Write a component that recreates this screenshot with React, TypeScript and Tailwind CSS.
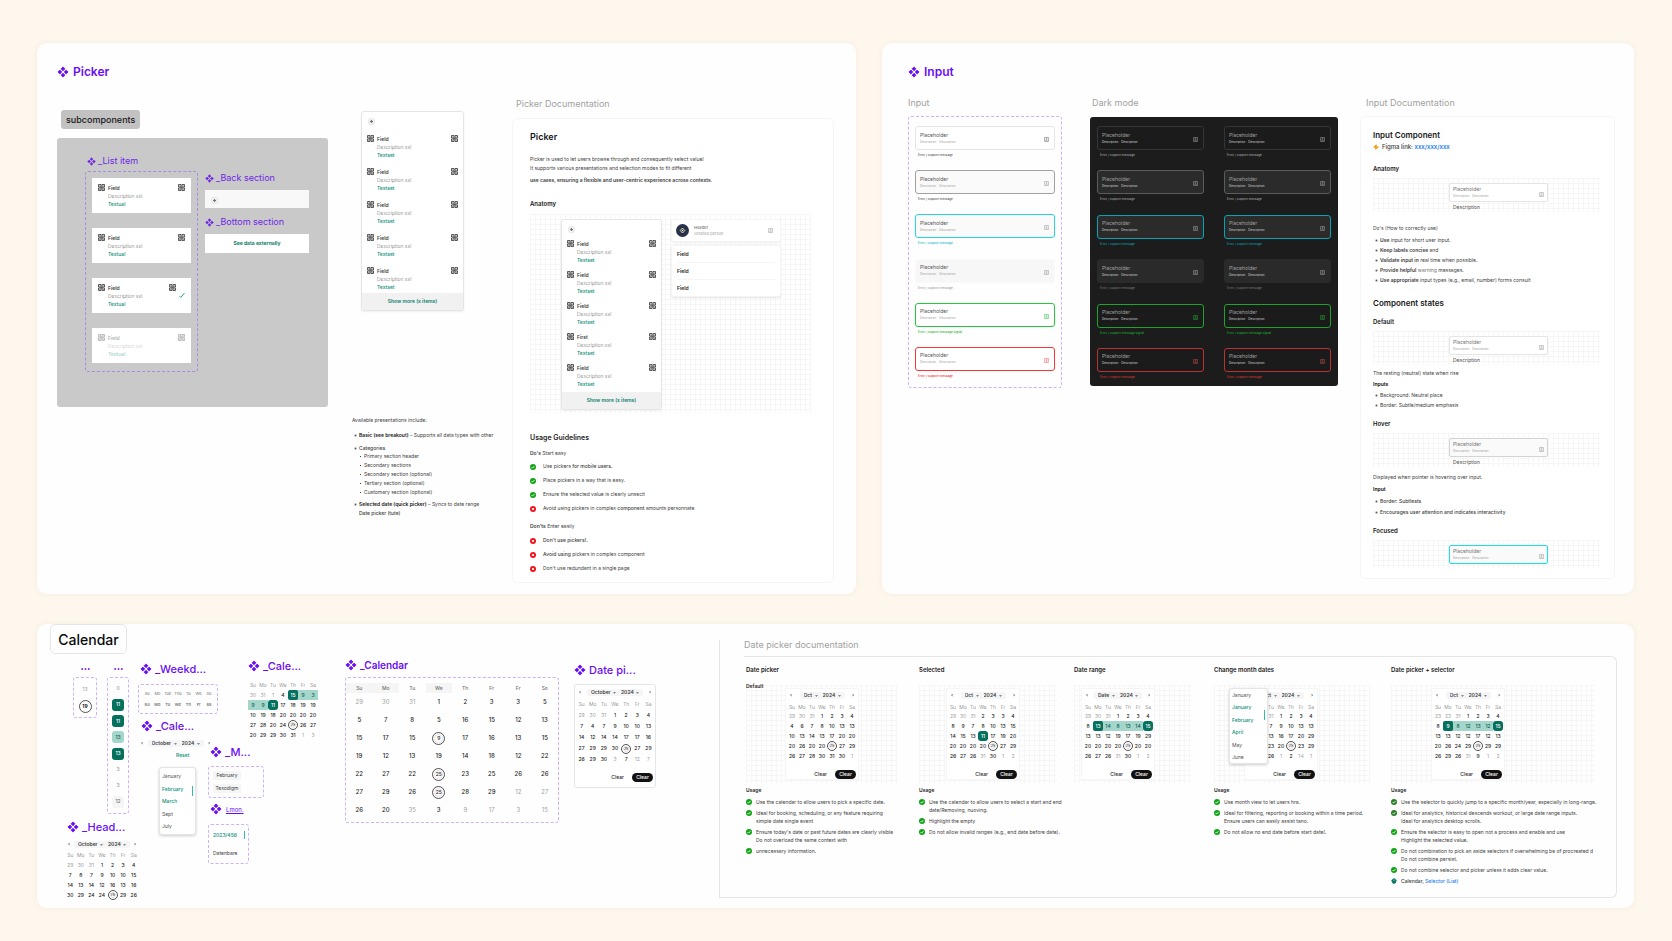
import type { ReactNode } from "react";

/* ---------- icons ---------- */

function ComponentIcon({ className }: { className: string }) {
  return (
    <svg viewBox="0 0 24 24" className={className} fill="currentColor" stroke="currentColor" strokeWidth="1.6" strokeLinejoin="round" aria-hidden="true">
      <path d="M12 1.8l3.9 3.9L12 9.6 8.100 5.700z" />
      <path d="M18.300 8.100l3.900 3.900-3.900 3.900-3.900-3.900z" />
      <path d="M12 14.400l3.900 3.900-3.900 3.900-3.900-3.900z" />
      <path d="M5.700 8.100l3.900 3.900-3.900 3.900L1.800 12z" />
    </svg>
  );
}

function CodeIcon({ className = "size-[7px] text-neutral-700" }: { className?: string }) {
  return (
    <svg viewBox="0 0 14 14" className={"shrink-0 " + className} fill="none" stroke="currentColor" strokeWidth="1.7" aria-hidden="true">
      <path d="M1 1h5v5H1zM8 1h5v5H8zM1 8h5v5H1zM8 8h5v5H8z" />
      <path d="M3.500 3v1.500M10.500 3v1.500M3.500 10v1.500M10.500 10v1.500M5.500 7h3" />
    </svg>
  );
}

function BadgeIcon({ className }: { className: string }) {
  return (
    <svg viewBox="0 0 12 12" className={"shrink-0 " + className} fill="none" stroke="currentColor" strokeWidth="1.400" aria-hidden="true">
      <rect x="1" y="1" width="10" height="10" rx="1" />
      <circle cx="6" cy="4.600" r="1.500" />
      <path d="M3 9.500c.6-1.800 5.400-1.800 6 0" />
    </svg>
  );
}

function BackIcon() {
  return (
    <svg viewBox="0 0 14 14" className="size-[7px] text-neutral-500" aria-hidden="true">
      <circle cx="7" cy="7" r="6.500" fill="#f3f3f3" stroke="#d4d4d4" />
      <path d="M7 4v6M4 7h6" stroke="currentColor" strokeWidth="2.400" />
    </svg>
  );
}

type Mark = "ok" | "no" | "deep" | "pin";

function StatusIcon({ mark }: { mark: Mark }) {
  if (mark === "pin") {
    return (
      <svg viewBox="0 0 12 12" className="size-[6px] shrink-0" aria-hidden="true">
        <path d="M6 0l5.500 4.500L9.500 10 6 12 2.500 10 .5 4.500z" fill="#0b7a68" />
        <path d="M6 3v3" stroke="#d4f0ea" strokeWidth="1.200" />
      </svg>
    );
  }
  const fill = mark === "no" ? "#f5141c" : mark === "deep" ? "#2b7d2b" : "#12a417";
  return (
    <svg viewBox="0 0 12 12" className="size-[6px] shrink-0" aria-hidden="true">
      <circle cx="6" cy="6" r="6" fill={fill} />
      {mark === "no" ? (
        <path d="M4.200 4.200l3.600 3.600M7.800 4.200L4.200 7.800" stroke="#fff" strokeWidth="1.900" />
      ) : (
        <path d="M3.200 6.200l2 2 3.600-4" stroke="#fff" strokeWidth="1.700" fill="none" />
      )}
    </svg>
  );
}

/* ---------- shared pieces ---------- */

function PanelTitle({ children }: { children: ReactNode }) {
  return (
    <h1 className="flex h-4 items-center gap-1 text-[12px] font-semibold text-[#6a0df5]">
      <ComponentIcon className="size-3" />
      {children}
    </h1>
  );
}

function PartTitle({ children, className = "", text = "text-[11px] font-medium" }: { children: ReactNode; className?: string; text?: string }) {
  return (
    <h2 className={"flex h-[14px] items-center gap-[3px] whitespace-nowrap text-[#6a0df5] " + text + " " + className}>
      <ComponentIcon className="size-3" />
      {children}
    </h2>
  );
}

function SubTitle({ children }: { children: ReactNode }) {
  return (
    <h3 className="flex h-3 items-center gap-[2px] text-[9px] whitespace-nowrap text-[#7026e6]">
      <ComponentIcon className="size-[9px]" />
      {children}
    </h3>
  );
}

function FrameLabel({ children }: { children: ReactNode }) {
  return <h2 className="h-3 text-[9px] leading-3 text-neutral-400">{children}</h2>;
}

function Stage({ children, className }: { children: ReactNode; className: string }) {
  return (
    <div className={"bg-[linear-gradient(#f6f6f6_1px,transparent_1px),linear-gradient(90deg,#f6f6f6_1px,transparent_1px)] bg-[size:5px_5px] " + className}>
      {children}
    </div>
  );
}

function Frame({ children, className, tone = "border-[#cdb2fa]" }: { children: ReactNode; className: string; tone?: string }) {
  return <div className={"rounded-[3px] border border-dashed " + tone + " " + className}>{children}</div>;
}

function FieldItem({ name = "Field", link, faded = false, checked = false }: { name?: string; link: string; faded?: boolean; checked?: boolean }) {
  return (
    <div className={"flex items-start gap-[3px] " + (faded ? "opacity-40" : "")}>
      <CodeIcon />
      <div className="flex-1">
        <p className="text-[5px] leading-[8px] font-semibold text-neutral-700">{name}</p>
        <p className="text-[5px] leading-[8px] font-light text-neutral-500">Description xxl</p>
        <a href="#field" className="block text-[5px] leading-[8px] font-medium text-[#0c8f7b]">{link}</a>
      </div>
      {checked ? (
        <div className="flex">
          <CodeIcon />
          <svg viewBox="0 0 10 10" className="mt-2 ml-[3px] size-[6px]" fill="none" stroke="#14a08a" strokeWidth="1.600" aria-hidden="true">
            <path d="M1 7l2 2 6-7" />
          </svg>
        </div>
      ) : (
        <CodeIcon />
      )}
    </div>
  );
}

function PickerCard({ names, className, listClass }: { names: string[]; className: string; listClass: string }) {
  return (
    <div className={"overflow-hidden rounded-[3px] border border-neutral-200 bg-white shadow-[0_1px_2px_rgba(0,0,0,0.06)] " + className}>
      <button type="button" aria-label="Back" className="mt-[6px] ml-[6px] block">
        <BackIcon />
      </button>
      <div className={"flex flex-col px-[5px] " + listClass}>
        {names.map((name, i) => (
          <FieldItem key={i} name={name} link="Textset" />
        ))}
      </div>
      <button type="button" className="block h-[17px] w-full bg-[#f1f1f1] text-[5px] font-semibold text-[#0b7f6d]">
        Show more (x items)
      </button>
    </div>
  );
}

function MarkedRow({ mark, children }: { mark: Mark; children: ReactNode }) {
  return (
    <li className="flex h-[14px] items-center gap-[7px] whitespace-nowrap">
      <StatusIcon mark={mark} />
      <span>{children}</span>
    </li>
  );
}

function Bullets({ items, className = "" }: { items: ReactNode[]; className?: string }) {
  return (
    <ul className={"text-[5px] leading-[10px] text-neutral-700 " + className}>
      {items.map((item, i) => (
        <li key={i} className="flex items-center gap-[3px] pl-[3px] whitespace-nowrap">
          <span className="size-[1px] rounded-full bg-neutral-800 outline outline-neutral-500/50" />
          <span>{item}</span>
        </li>
      ))}
    </ul>
  );
}

/* ---------- picker ---------- */

function Subcomponents() {
  return (
    <div className="mt-3 w-[271px] shrink-0">
      <p className="ml-[4px] h-[19px] w-fit rounded-[3px] bg-[#c2c2c2] px-[5px] text-[9px] leading-[19px] font-medium text-neutral-900">subcomponents</p>
      <div className="mt-[9px] flex h-[269px] items-start gap-[7px] rounded-[3px] bg-[#c9c9c9] pt-[17px] pl-[28px]">
        <div>
          <div className="ml-[2px]">
            <SubTitle>_List item</SubTitle>
          </div>
          <Frame tone="border-[#a98be0]" className="mt-1 flex w-[113px] flex-col gap-[15px] px-[6px] pt-[6px] pb-[8px]">
            {[0, 1, 2, 3].map((i) => (
              <div key={i} className="h-[35px] bg-white px-[6px] pt-[6px]">
                <FieldItem link="Textual" faded={i === 3} checked={i === 2} />
              </div>
            ))}
          </Frame>
        </div>
        <div className="w-[104px] pt-[17px]">
          <SubTitle>_Back section</SubTitle>
          <div className="mt-[6px] flex h-[18px] items-center bg-[#f8f8f8] pt-[3px] pl-[6px]">
            <BackIcon />
          </div>
          <div className="mt-2">
            <SubTitle>_Bottom section</SubTitle>
          </div>
          <button type="button" className="mt-[6px] block h-[19px] w-full bg-white text-[5px] font-bold text-[#0b7f6d]">
            See data externally
          </button>
        </div>
      </div>
    </div>
  );
}

function Presentations() {
  return (
    <div className="mt-[105px] text-[5px] text-neutral-700">
      <p className="leading-[8px]">Available presentations include:</p>
      <Bullets className="mt-[6px]" items={[<><b className="font-semibold text-neutral-900">Basic (see breakout)</b> – Supports all data types with other</>]} />
      <Bullets className="mt-[3px]" items={[<span className="font-medium">Categories</span>]} />
      <ul className="ml-[6px] -mt-px leading-[9px]">
        {["Primary section header", "Secondary sections", "Secondary section (optional)", "Tertiary section (optional)", "Customary section (optional)"].map((t, i) => (
          <li key={i} className="flex items-center gap-[3px] pl-[2px] whitespace-nowrap">
            <span className="size-[1px] bg-neutral-700" />
            {t}
          </li>
        ))}
      </ul>
      <Bullets className="mt-[2px]" items={[<><b className="font-semibold text-neutral-900">Selected date (quick picker)</b> – Syncs to date range</>]} />
      <p className="pl-[7px] leading-[8px] font-medium">Date picker (tute)</p>
    </div>
  );
}

function PickerDoc() {
  return (
    <div className="mr-[22px] min-w-0 flex-1">
      <div className="pl-1">
        <FrameLabel>Picker Documentation</FrameLabel>
      </div>
      <article className="mt-2 rounded-md border border-neutral-100 bg-white pt-3 pr-[21px] pb-[6px] pl-[17px] text-[5px] text-neutral-700">
        <h3 className="text-[9px] leading-3 font-semibold text-neutral-900">Picker</h3>
        <p className="mt-3 leading-[9px]">
          Picker is used to let users browse through and consequently select value!
          <br />
          It supports various presentations and selection modes to fit different
        </p>
        <p className="mt-[3px] leading-[9px] font-semibold">use cases, ensuring a flexible and user-centric experience across contexts.</p>
        <h4 className="mt-[15px] text-[6px] leading-[8px] font-semibold text-neutral-900">Anatomy</h4>
        <Stage className="mt-[6px] flex h-[199px] items-start gap-[9px] pt-[5px] pl-[31px]">
          <PickerCard names={["Field", "Field", "Field", "First", "Field"]} className="w-[101px] shrink-0" listClass="mt-[7px] mb-[4px] gap-[7px]" />
          <div className="w-[110px]">
            <div className="flex h-[23px] items-center rounded-[3px] border border-neutral-100 bg-white px-[4px] shadow-[0_1px_2px_rgba(0,0,0,0.06)]">
              <svg viewBox="0 0 26 26" className="size-[13px]" aria-hidden="true">
                <circle cx="13" cy="13" r="13" fill="#27324a" />
                <path d="M13 8l4.500 5-4.500 5-4.500-5z" fill="none" stroke="#e6dca0" strokeWidth="2" />
                <circle cx="13" cy="13" r="1.500" fill="#fff" />
              </svg>
              <div className="ml-[5px] flex-1 text-[4px] leading-[6px] text-neutral-400">
                <p className="font-medium text-neutral-500">Header</p>
                <p>Greeted person</p>
              </div>
              <BadgeIcon className="mr-[3px] size-[5px] text-neutral-400" />
            </div>
            <ul className="mt-[3px] divide-y divide-neutral-100 rounded-[3px] border border-neutral-100 bg-white px-[5px] text-[5px] leading-[16px] font-semibold text-neutral-800 shadow-[0_1px_2px_rgba(0,0,0,0.1)]">
              <li>Field</li>
              <li>Field</li>
              <li>Field</li>
            </ul>
          </div>
        </Stage>
        <h4 className="mt-5 text-[7px] leading-[10px] font-semibold text-neutral-800">Usage Guidelines</h4>
        <p className="mt-[6px] leading-[8px]"><b className="font-semibold">Do's</b> Start easy</p>
        <ul className="mt-[3px]">
          <MarkedRow mark="ok">Use pickers <b className="font-medium">for mobile users.</b></MarkedRow>
          <MarkedRow mark="ok">Place pickers in a way that is easy.</MarkedRow>
          <MarkedRow mark="ok">Ensure the selected value is clearly unsecit</MarkedRow>
          <MarkedRow mark="no">Avoid using pickers in complex <b className="font-medium">component</b> amounts personnate</MarkedRow>
        </ul>
        <p className="mt-[6px] leading-[8px]"><b className="font-semibold">Don'ts</b> Enter easily</p>
        <ul className="mt-1">
          <MarkedRow mark="no"><b className="font-medium">Don't use pickers!.</b></MarkedRow>
          <MarkedRow mark="no"><b className="font-medium">Avoid using</b> pickers in complex component</MarkedRow>
          <MarkedRow mark="no">Don't use redundant in a single page</MarkedRow>
        </ul>
      </article>
    </div>
  );
}

/* ---------- input ---------- */

type Variant = { id: string; light: string; lightMsg: string; lightIcon: string; dark: string; darkMsg: string; darkIcon: string; msg: string };

const variants: Variant[] = [
  { id: "default", light: "border-neutral-200 bg-white", lightMsg: "text-neutral-600", lightIcon: "text-neutral-500", dark: "border-[#353535] bg-[#1b1b1b]", darkMsg: "text-neutral-400", darkIcon: "text-neutral-400", msg: "Error / support message" },
  { id: "hover", light: "border-neutral-400 bg-neutral-50", lightMsg: "text-neutral-600", lightIcon: "text-neutral-400", dark: "border-[#5c5c5c] bg-[#2b2b2b]", darkMsg: "text-neutral-400", darkIcon: "text-neutral-400", msg: "Error / support message" },
  { id: "focus", light: "border-[#22d7dd] bg-neutral-50", lightMsg: "text-[#13b9c9]", lightIcon: "text-neutral-400", dark: "border-[#07a3b5] bg-[#2b2b2b]", darkMsg: "text-[#1698a8]", darkIcon: "text-neutral-400", msg: "Error / support message" },
  { id: "disabled", light: "border-neutral-50 bg-[#f7f7f7]", lightMsg: "text-neutral-400", lightIcon: "text-neutral-400", dark: "border-[#2a2a2a] bg-[#2a2a2a]", darkMsg: "text-neutral-500", darkIcon: "text-neutral-400", msg: "Error / support message" },
  { id: "success", light: "border-[#22c93a] bg-white", lightMsg: "text-[#19b82f]", lightIcon: "text-[#43c455]", dark: "border-[#1fa32f] bg-[#1b1b1b]", darkMsg: "text-[#1fa32f]", darkIcon: "text-[#1fa32f]", msg: "Error / support message signal" },
  { id: "error", light: "border-[#fb3434] bg-white", lightMsg: "text-[#f52222]", lightIcon: "text-[#f86a6a]", dark: "border-[#b93232] bg-[#1b1b1b]", darkMsg: "text-[#d03434]", darkIcon: "text-[#b94a4a]", msg: "Error / support message" },
];

function TextField({ id, box, msg, msgClass, icon, dark = false }: { id: string; box: string; msg: string; msgClass: string; icon: string; dark?: boolean }) {
  return (
    <div>
      <div className={"flex h-6 items-center rounded-[3px] border pr-[5px] pl-[4px] " + box}>
        <div className="min-w-0 flex-1">
          <input
            id={id}
            aria-label="Placeholder"
            placeholder="Placeholder"
            className={"block h-[8px] w-full bg-transparent text-[5px] leading-[8px] outline-none " + (dark ? "placeholder:text-neutral-400" : "placeholder:text-neutral-600")}
          />
          <p className={"flex gap-[3px] text-[3px] leading-[7px] " + (dark ? "text-neutral-300" : "text-neutral-400")}>
            <span>Description</span>
            <span>Description</span>
          </p>
        </div>
        <BadgeIcon className={"mt-[3px] size-[5px] " + icon} />
      </div>
      <label htmlFor={id} className={"mt-[1px] block pl-[3px] text-[3px] leading-[8px] font-medium " + msgClass}>{msg}</label>
    </div>
  );
}

function SmallField({ id, box, note }: { id: string; box: string; note?: string }) {
  return (
    <div className="w-[99px]">
      <div className={"flex h-[19px] items-center rounded-[2px] border px-[3px] " + box}>
        <div className="min-w-0 flex-1">
          <input id={id} aria-label="Placeholder" placeholder="Placeholder" className="block h-[7px] w-full bg-transparent text-[5px] leading-[7px] outline-none placeholder:text-neutral-500" />
          <p className="flex gap-[3px] text-[3px] leading-[6px] text-neutral-400">
            <span>Description</span>
            <span>Description</span>
          </p>
        </div>
        <BadgeIcon className="mt-[3px] size-[5px] text-neutral-400" />
      </div>
      {note && <label htmlFor={id} className="mt-[1px] block pl-[4px] text-[5px] leading-[8px] text-neutral-600">{note}</label>}
    </div>
  );
}

function FieldStage({ id, box, note = "Description", className = "h-[34px]" }: { id: string; box: string; note?: string; className?: string }) {
  return (
    <Stage className={"mt-[5px] mr-[14px] flex justify-center pt-[5px] pl-6 " + className}>
      <SmallField id={id} box={box} note={note} />
    </Stage>
  );
}

function InputDoc() {
  return (
    <div className="mr-[19px] ml-[22px] min-w-0 flex-1">
      <div className="pl-[6px]">
        <FrameLabel>Input Documentation</FrameLabel>
      </div>
      <article className="mt-[7px] rounded-[5px] border border-neutral-100 bg-white pt-3 pb-[10px] pl-3 text-[5px] leading-[8px] text-neutral-700">
        <h3 className="text-[8px] leading-3 font-semibold text-neutral-900">Input Component</h3>
        <p className="mt-[2px] flex items-center gap-[3px] text-[6px] font-medium">
          <svg viewBox="0 0 12 12" className="size-[6px]" aria-hidden="true">
            <path d="M7 0L0 6.500l4 1L5 12l7-6.500-4.500-1z" fill="#f59a1b" />
          </svg>
          <span>Figma link: <a href="#figma" className="font-semibold text-[#1b7cf2]">xxx/xxx/xxx</a></span>
        </p>
        <h4 className="mt-[14px] text-[6px] font-semibold text-neutral-900">Anatomy</h4>
        <FieldStage id="doc-anatomy" box="border-neutral-200 bg-white" />
        <p className="mt-3">Do's (How to correctly use)</p>
        <Bullets
          className="mt-[3px]"
          items={[
            <><b className="font-semibold">Use</b> input for short user input.</>,
            <><b className="font-semibold">Keep labels concise</b> and</>,
            <><b className="font-semibold">Validate input in</b> real time when possible.</>,
            <><b className="font-semibold">Provide helpful</b> <span className="text-neutral-500">warning</span> messages.</>,
            <><b className="font-semibold">Use appropriate</b> input types (e.g., email, number) forms consult</>,
          ]}
        />
        <h3 className="mt-[13px] text-[8px] leading-[10px] font-semibold text-neutral-900">Component states</h3>
        <h4 className="mt-[10px] text-[6px] font-semibold text-neutral-900">Default</h4>
        <FieldStage id="doc-default" box="border-neutral-200 bg-white" />
        <p className="mt-1">The resting (neutral) state when rise</p>
        <h5 className="mt-[3px] font-bold text-neutral-800">Inputs</h5>
        <Bullets className="mt-[2px]" items={["Background: Neutral place", "Border: Subtle/medium emphasis"]} />
        <h4 className="mt-[10px] text-[6px] font-semibold text-neutral-900">Hover</h4>
        <FieldStage id="doc-hover" box="border-neutral-300 bg-neutral-50" />
        <p className="mt-[6px]">Displayed when pointer is hovering over input.</p>
        <h5 className="mt-1 font-bold text-neutral-800">Input</h5>
        <Bullets className="mt-[3px] font-medium" items={["Border: Subtlests"]} />
        <Bullets className="mt-px font-medium" items={["Encourages user attention and indicates interactivity"]} />
        <h4 className="mt-[10px] text-[6px] font-semibold text-neutral-900">Focused</h4>
        <FieldStage id="doc-focus" box="border-[#19e0e6] bg-neutral-50" note="" className="h-[28px]" />
      </article>
    </div>
  );
}

/* ---------- calendar ---------- */

/* Cell notation: "~29" muted, "(24)" today, "[11]" range end, "<11" selected day, "=12" in range. */
function DayCell({ text, height, ring }: { text: string; height: string; ring: string }) {
  const mark = text[0];
  const label = text.replace(/[~()[\]=<]/g, "");
  if (mark === "(") {
    return (
      <td className={"p-0 " + height}>
        <span className={"-my-1 inline-flex items-center justify-center rounded-full border border-neutral-600 bg-white align-middle outline-1 -outline-offset-3 outline-neutral-200 " + ring}>{label}</span>
      </td>
    );
  }
  if (mark === "[") {
    return (
      <td className={"bg-[linear-gradient(90deg,transparent_50%,#a5d6cb_50%)] p-0 " + height}>
        <span className="-my-1 inline-flex h-[10px] w-[10px] items-center justify-center rounded-[2px] bg-[#04705d] align-middle text-white">{label}</span>
      </td>
    );
  }
  if (mark === "<") {
    return (
      <td className={"p-0 " + height}>
        <span className="-my-1 inline-flex h-[10px] w-[10px] items-center justify-center rounded-[3px] bg-[#04705d] align-middle text-white">{label}</span>
      </td>
    );
  }
  const tone = mark === "~" ? "text-neutral-400 font-normal" : mark === "=" ? "bg-[#a5d6cb] text-[#0b6152]" : "";
  return <td className={"p-0 " + height + " " + tone}>{label}</td>;
}

const week = ["Su", "Mo", "Tu", "We", "Th", "Fr", "Sa"];

function DayTable({ rows, height = "h-[10px]", className = "", head = "h-[10px]" }: { rows: string[]; height?: string; className?: string; head?: string }) {
  return (
    <table className={"w-full table-fixed border-collapse text-center text-[5px] leading-none font-medium text-neutral-800 " + className}>
      <thead>
        <tr className={"text-[5px] text-neutral-500 " + head}>
          {week.map((d) => (
            <th key={d} scope="col" className="p-0 font-light">{d}</th>
          ))}
        </tr>
      </thead>
      <tbody>
        {rows.map((row, i) => (
          <tr key={i}>
            {row.split(" ").map((cell, j) => (
              <DayCell key={j} text={cell} height={height} ring="size-[10px] text-[4px]" />
            ))}
          </tr>
        ))}
      </tbody>
    </table>
  );
}

function MonthNav({ month, year = "2024", className = "" }: { month: string; year?: string; className?: string }) {
  return (
    <div className={"flex items-center justify-between px-[3px] text-[5px] leading-[7px] font-semibold text-neutral-700 " + className}>
      <button type="button" aria-label="Previous month">‹</button>
      <div className="flex items-center gap-[5px] rounded-[2px] bg-neutral-100 px-[4px]">
        <label className="flex items-center gap-[2px]">
          <select aria-label="Month" defaultValue={month} className="appearance-none bg-transparent outline-none">
            <option>{month}</option>
          </select>
          <svg viewBox="0 0 6 4" className="h-[2px] w-[3px]" aria-hidden="true"><path d="M0 0h6L3 4z" fill="#888" /></svg>
        </label>
        <label className="flex items-center gap-[2px]">
          <select aria-label="Year" defaultValue={year} className="appearance-none bg-transparent outline-none">
            <option>{year}</option>
          </select>
          <svg viewBox="0 0 6 4" className="h-[2px] w-[3px]" aria-hidden="true"><path d="M0 0h6L3 4z" fill="#888" /></svg>
        </label>
      </div>
      <button type="button" aria-label="Next month">›</button>
    </div>
  );
}

function CardButtons() {
  return (
    <div className="flex items-center justify-end gap-[8px] text-[5px] leading-none font-medium">
      <button type="button" className="text-neutral-800">Clear</button>
      <button type="button" className="h-[9px] w-[21px] rounded-full bg-[#111] text-white">Clear</button>
    </div>
  );
}

function DocCalendar({ rows, month = "Oct" }: { rows: string[]; month?: string }) {
  return (
    <div className="h-[90px] w-[72px] bg-white px-[1px] pt-[3px] outline outline-neutral-100">
      <MonthNav month={month} className="mb-[4px]" />
      <DayTable rows={rows} head="h-[8px]" />
      <div className="mt-[9px] pr-[1px]">
        <CardButtons />
      </div>
    </div>
  );
}

function MonthMenu({ items, active, className }: { items: string[]; active: number[]; className: string }) {
  return (
    <ul className={"relative flex flex-col justify-between rounded-[3px] border border-neutral-200 bg-white pl-[2px] text-[5px] leading-[8px] text-neutral-600 shadow-[0_1px_3px_rgba(0,0,0,0.2)] " + className}>
      {items.map((m, i) => (
        <li key={i} className={active.includes(i) ? "font-medium text-[#0c8f7b]" : ""}>{m}</li>
      ))}
      <li aria-hidden="true" className="absolute top-[28%] right-[2px] h-[10px] w-[1px] bg-[#2fc0a4]" />
    </ul>
  );
}

function DocColumn({ title, stage, children, usage }: { title: string; stage: string; children: ReactNode; usage?: { mark?: Mark; lines: ReactNode[] }[] }) {
  return (
    <section className="min-w-0">
      <h3 className="text-[6px] leading-3 font-semibold whitespace-nowrap text-neutral-900">{title}</h3>
      <Stage className={"relative mt-[9px] h-[98px] pt-1 " + stage}>{children}</Stage>
      {usage && (
        <>
          <h4 className="mt-[3px] text-[5px] leading-[8px] font-semibold text-neutral-800">Usage</h4>
          <ul className="mt-1 flex flex-col gap-[3px] text-[5px] leading-[8px] text-neutral-700">
            {usage.map((u, i) => (
              <li key={i} className="flex items-start gap-[4px] whitespace-nowrap">
                <span className="mt-[1px]"><StatusIcon mark={u.mark ?? "ok"} /></span>
                <p>
                  {u.lines.map((l, j) => (
                    <span key={j} className="block">{l}</span>
                  ))}
                </p>
              </li>
            ))}
          </ul>
        </>
      )}
    </section>
  );
}

const bigWeek = ["Su", "Mo", "Tu", "We", "Th", "Fr", "Fr", "So"];
const bigRows = [
  "~29 ~30 ~31 1 2 3 3 5",
  "5 7 8 5 16 15 12 13",
  "15 17 15 (9) 17 16 13 15",
  "19 12 13 19 14 18 12 22",
  "22 27 22 (25) 23 25 26 26",
  "27 29 26 (25) 28 29 ~12 ~27",
  "26 20 ~35 3 ~9 ~17 ~3 ~15",
];

function BigCalendar() {
  return (
    <Frame className="mt-[5px] h-[146px] w-[214px] shrink-0 pt-[5px] pb-[5px]">
      <table className="h-full w-full table-fixed border-collapse text-center text-[6px] leading-none font-medium text-neutral-800">
        <thead>
          <tr className="h-[10px]">
            {bigWeek.map((d, i) => (
              <th key={i} scope="col" className={"p-0 text-[5px] font-medium text-neutral-500 " + (i < 2 || i === 3 ? "bg-neutral-100" : "")}>{d}</th>
            ))}
          </tr>
        </thead>
        <tbody>
          {bigRows.map((r, i) => (
            <tr key={i}>
              {r.split(" ").map((c, j) => (
                <DayCell key={j} text={c} height="h-[18px]" ring="size-[13px] text-[5px]" />
              ))}
            </tr>
          ))}
        </tbody>
      </table>
    </Frame>
  );
}

function Dots() {
  return (
    <svg viewBox="0 0 9 8" className="h-2 w-[9px] fill-[#7a2cf7]" aria-hidden="true">
      <circle cx="1.200" cy="4" r="1" />
      <circle cx="4.500" cy="4" r="1" />
      <circle cx="7.800" cy="4" r="1" />
    </svg>
  );
}

const dayStates = [
  { t: "0", c: "text-neutral-400" },
  { t: "11", c: "bg-[#04705d] text-white" },
  { t: "11", c: "bg-[#04705d] text-white" },
  { t: "13", c: "bg-[#a5d6cb] text-[#0b6152]" },
  { t: "13", c: "bg-[#04705d] text-white" },
  { t: "3", c: "text-neutral-400" },
  { t: "3", c: "text-neutral-400" },
  { t: "12", c: "bg-neutral-100 text-neutral-500" },
];

function CalendarParts() {
  return (
    <div className="flex items-start pb-[8px] pl-[26px]">
      <div className="w-[75px] shrink-0 pt-[11px]">
        <div className="flex items-start gap-[10px] pl-[10px]">
          <div className="flex flex-col items-center gap-1">
            <Dots />
            <Frame className="flex h-[41px] w-6 flex-col items-center gap-[6px] pt-[6px] text-[5px]">
              <span className="leading-[10px] text-neutral-400">13</span>
              <span className="flex size-[13px] items-center justify-center rounded-full border border-neutral-600 font-semibold">19</span>
            </Frame>
          </div>
          <div className="flex flex-col items-center gap-1">
            <Dots />
            <Frame className="flex h-[137px] w-[22px] flex-col items-center justify-between py-[5px] text-[5px] font-medium">
              {dayStates.map((d, i) => (
                <span key={i} className={"flex size-[12px] items-center justify-center rounded-[3px] " + d.c}>{d.t}</span>
              ))}
            </Frame>
          </div>
        </div>
        <PartTitle className="mt-[6px] ml-1">_Head...</PartTitle>
        <div className="mt-[7px] ml-[2px] w-[74px]">
          <MonthNav month="October" className="mb-[2px]" />
          <DayTable rows={["~29 ~30 ~31 1 2 3 4", "7 8 7 9 10 10 15", "14 13 14 12 16 13 16", "30 29 24 24 (25) 29 26"]} />
        </div>
      </div>

      <div className="w-[70px] shrink-0 pt-2">
        <PartTitle className="ml-[2px]">_Weekd...</PartTitle>
        <Frame className="mt-[8px] grid h-[30px] w-20 grid-cols-7 items-center px-[3px] py-[3px] text-center text-[4px] text-neutral-500">
          {["Su", "Mo", "Tue", "Thu", "Tu", "We", "Su", "Su", "Mo", "Tu", "We", "Th", "Fr", "Sa"].map((d, i) => (
            <span key={i} className={i > 6 ? "font-semibold" : ""}>{d}</span>
          ))}
        </Frame>
        <PartTitle className="mt-[5px] ml-[3px]">_Cale...</PartTitle>
        <MonthNav month="October" className="mt-[7px] w-[75px]" />
        <button type="button" className="mt-[4px] ml-[38px] block text-[5px] leading-[8px] font-medium text-[#0c8f7b]">Reset</button>
        <MonthMenu items={["January", "February", "March", "Sept", "July"]} active={[1, 2]} className="mt-[8px] ml-[21px] h-[68px] w-[37px] py-[4px]" />
      </div>

      <div className="w-[137px] shrink-0 pt-[5px]">
        <div className="ml-10 w-[70px]">
          <PartTitle>_Cale...</PartTitle>
          <DayTable className="mt-[7px]" rows={["~30 ~31 ~1 4 [15] =9 =3", "=9 =9 <11 17 18 19 19", "10 19 18 20 20 20 20", "27 28 20 24 (25) 26 27", "20 29 29 30 31 ~1 ~3"]} />
        </div>
        <PartTitle className="mt-[5px] ml-[2px]">_M...</PartTitle>
        <Frame className="mt-[7px] flex h-8 w-14 flex-col items-start justify-between px-[4px] py-[4px] text-[5px] text-neutral-700">
          <button type="button" className="h-[9px] w-7 rounded-[1px] bg-neutral-100 leading-[9px]">February</button>
          <button type="button" className="h-[9px] w-7 rounded-[1px] bg-neutral-100 leading-[9px]">Texodigm</button>
        </Frame>
        <h2 className="mt-1 ml-[2px] flex h-[14px] items-center gap-1 text-[6px] text-[#6a0df5]">
          <ComponentIcon className="size-3" />
          <span className="underline">Lmon.</span>
        </h2>
        <Frame className="mt-2 flex h-10 w-[41px] flex-col justify-between py-[6px] pr-[3px] pl-[4px] text-[5px] leading-[8px]">
          <p className="border-r border-[#2fc0a4] font-medium text-[#0c8f7b]">2023/456</p>
          <p className="text-neutral-700">Datenbare</p>
        </Frame>
      </div>

      <div className="shrink-0 pt-1">
        <PartTitle text="text-[10px] font-semibold">_Calendar</PartTitle>
        <BigCalendar />
      </div>

      <div className="ml-[15px] w-[82px] shrink-0 pt-[9px]">
        <PartTitle>Date pi...</PartTitle>
        <div className="mt-[7px] h-[104px] rounded-[3px] border border-neutral-200 bg-white px-px pt-1">
          <MonthNav month="October" className="mb-[3px]" />
          <DayTable height="h-[11px]" head="h-[11px]" rows={["~29 ~30 ~31 1 2 3 4", "7 4 7 9 10 10 13", "14 12 14 14 17 17 16", "27 29 29 30 (25) 27 29", "26 29 30 ~3 7 ~12 ~7"]} />
          <div className="mt-[8px] pr-[1px]">
            <CardButtons />
          </div>
        </div>
      </div>
    </div>
  );
}

function CalendarDoc() {
  return (
    <div className="mt-4 mr-[17px] mb-[10px] flex min-w-0 flex-1 flex-col border-l border-neutral-200">
      <h2 className="h-4 pl-6 text-[9px] leading-[10px] text-neutral-400">Date picker documentation</h2>
      <div className="ml-6 h-2 rounded-tr-md border-t border-r border-neutral-200" />
      <div className="grid flex-1 grid-cols-[173fr_155fr_140fr_177fr_225fr] rounded-br-md border-r border-b border-neutral-200 pl-[26px]">
        <DocColumn
          title="Date picker"
          stage="mr-[21px] pl-10"
          usage={[
            { lines: ["Use the calendar to allow users to pick a specific date."] },
            { lines: ["Ideal for booking, scheduling, or any feature requiring", "simple date single event"] },
            { lines: ["Ensure today's date or past future dates are clearly visible", "Do not overload the same context with"] },
            { lines: ["unnecessary information."] },
          ]}
        >
          <p className="absolute top-[-3px] left-0 text-[5px] leading-[8px] font-semibold text-neutral-800">Default</p>
          <DocCalendar rows={["~29 ~30 ~31 1 2 3 4", "4 6 7 8 10 13 13", "10 13 14 13 17 20 20", "20 26 20 20 (25) 27 29", "26 27 28 30 31 30 ~1"]} />
        </DocColumn>
        <DocColumn
          title="Selected"
          stage="mr-[17px] pl-7"
          usage={[
            { lines: ["Use the calendar to allow users to select a start and end", "date/Removing, nuoving."] },
            { lines: ["Highlight the empty"] },
            { lines: ["Do not allow invalid ranges (e.g., end date before date)."] },
          ]}
        >
          <DocCalendar rows={["~29 ~30 ~31 2 3 3 4", "8 9 7 8 10 13 15", "14 15 13 <11 17 19 20", "20 20 20 20 (25) 27 29", "26 27 26 ~31 30 ~1 ~2"]} />
        </DocColumn>
        <DocColumn title="Date range" stage="mr-[23px] pl-[8px]">
          <DocCalendar month="Date" rows={["~29 ~30 ~31 1 2 3 4", "8 [13] =14 =8 =13 =14 <15", "13 13 12 19 17 19 29", "20 20 20 20 (25) 20 20", "26 27 26 ~31 30 ~1 ~2"]} />
        </DocColumn>
        <DocColumn
          title="Change month dates"
          stage="mr-[21px] pl-[31px]"
          usage={[
            { lines: ["Use month view to let users hra."] },
            { lines: ["Ideal for filtering, reporting or booking within a time period.", "Ensure users can easily assist tano."] },
            { lines: ["Do not allow no end date before start date!."] },
          ]}
        >
          <DocCalendar rows={["~29 ~30 ~31 1 2 3 4", "6 6 7 9 10 13 13", "14 15 13 16 17 20 29", "20 22 23 20 (25) 23 29", "26 27 26 ~1 2 ~14 ~1"]} />
          <div className="absolute top-[3px] left-[15px] w-[39px]">
            <MonthMenu items={["January", "January", "February", "April", "May", "June"]} active={[1, 2, 3]} className="h-[76px] py-[2px]" />
          </div>
        </DocColumn>
        <DocColumn
          title="Date picker + selector"
          stage="mr-[21px] pl-[41px]"
          usage={[
            { mark: "deep", lines: ["Use the selector to quickly jump to a specific month/year, especially in long-range."] },
            { mark: "deep", lines: ["Ideal for analytics, historical descends workout, or large date range inputs.", "Ideal for analytics desktop scrolls."] },
            { lines: ["Ensure the selector is easy to open not a process and enable and use", "Highlight the selected value."] },
            { lines: ["Do not combination to pick an aside selectors if overwhelming be of procreated d", "Do not combine persist."] },
            { lines: ["Do not combine selector and picker unless it adds clear value."] },
            { mark: "pin", lines: [<span key="ref" className="font-medium">Calendar, <a href="#selector" className="text-[#1b7cf2]">Selector (List)</a></span>] },
          ]}
        >
          <DocCalendar rows={["~23 ~23 ~31 1 2 3 4", "8 [9] =8 =12 =13 =12 <15", "13 13 12 12 17 12 13", "20 26 24 29 (25) 29 29", "26 29 26 ~31 9 ~1 ~2"]} />
        </DocColumn>
      </div>
    </div>
  );
}

/* ---------- page ---------- */

export default function App() {
  return (
    <main className="grid min-h-screen content-start gap-x-[26px] gap-y-[30px] bg-[#fef7ed] pt-[43px] pr-[38px] pb-[35px] pl-[37px] font-['Inter','Liberation_Sans',sans-serif] antialiased lg:grid-cols-[819fr_752fr]">
      <section className="overflow-hidden rounded-[10px] bg-[#fefefe] pt-[21px] pb-[11px] pl-5 shadow-[0_0_6px_rgba(150,110,60,0.08)]">
        <PanelTitle>Picker</PanelTitle>
        <div className="mt-[18px] flex items-start">
          <Subcomponents />
          <div className="ml-6 w-40 shrink-0 pt-[13px]">
            <PickerCard names={["Field", "Field", "Field", "Field", "Field"]} className="ml-[9px] w-[103px]" listClass="mt-[10px] mb-[2px] gap-[9px]" />
            <Presentations />
          </div>
          <PickerDoc />
        </div>
      </section>

      <section className="overflow-hidden rounded-[10px] bg-[#fefefe] pt-[21px] pb-[11px] pl-[26px] shadow-[0_0_6px_rgba(150,110,60,0.08)]">
        <PanelTitle>Input</PanelTitle>
        <div className="mt-[17px] flex items-start">
          <div className="w-[154px] shrink-0">
            <FrameLabel>Input</FrameLabel>
            <Frame className="mt-[7px] flex h-[272px] flex-col justify-between px-[6px] pt-[9px] pb-[7px]">
              {variants.map((v) => (
                <TextField key={v.id} id={"light-" + v.id} box={v.light} msg={v.msg} msgClass={v.lightMsg} icon={v.lightIcon} />
              ))}
            </Frame>
          </div>
          <div className="ml-7 w-[248px] shrink-0">
            <div className="pl-[2px]">
              <FrameLabel>Dark mode</FrameLabel>
            </div>
            <div className="mt-2 grid h-[269px] grid-cols-2 content-between gap-x-5 rounded-[3px] bg-[#1c1c1c] px-[7px] pt-[9px] pb-[5px]">
              {variants.flatMap((v) =>
                ["a", "b"].map((k) => (
                  <TextField key={v.id + k} id={"dark-" + v.id + "-" + k} box={v.dark} msg={v.msg} msgClass={v.darkMsg} icon={v.darkIcon} dark />
                ))
              )}
            </div>
          </div>
          <InputDoc />
        </div>
      </section>

      <section className="flex items-stretch overflow-hidden rounded-[10px] bg-[#fefefe] shadow-[0_0_6px_rgba(150,110,60,0.08)] lg:col-span-2">
        <div className="w-[682px] shrink-0">
          <h1 className="ml-[13px] flex h-[30px] w-[77px] items-center justify-center rounded-[5px] border border-neutral-200 bg-white text-[14px] font-medium text-neutral-950">Calendar</h1>
          <CalendarParts />
        </div>
        <CalendarDoc />
      </section>
    </main>
  );
}
